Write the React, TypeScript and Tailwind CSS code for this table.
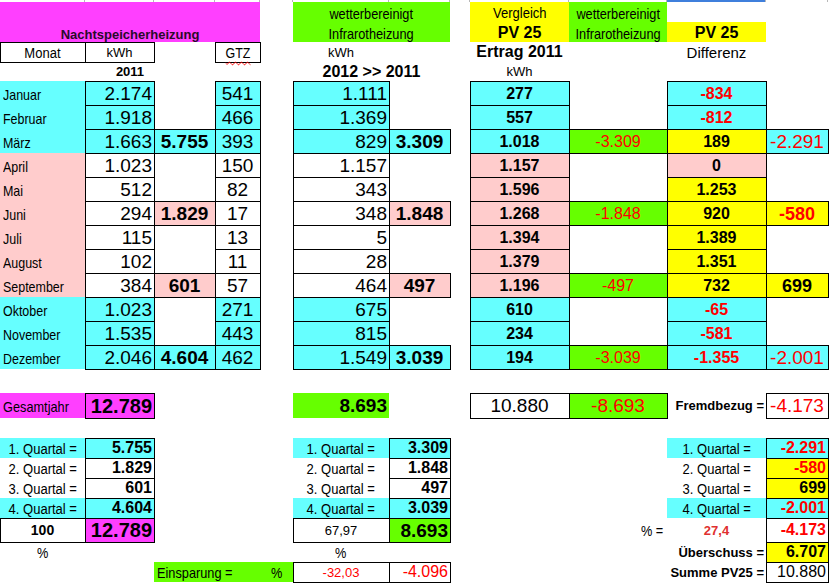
import React from 'react'

const CYAN = 'bg-[#66ffff]'
const PINK = 'bg-[#ffcccc]'
const MAG = 'bg-[#ff3fff]'
const GREEN = 'bg-[#66ff00]'
const YELLOW = 'bg-[#ffff00]'

// collapsed 1px cell border
const BOX =
  'shadow-[1px_0_0_0_#000,0_1px_0_0_#000,1px_1px_0_0_#000,inset_1px_0_0_0_#000,inset_0_1px_0_0_#000]'

const COLS = 'grid grid-cols-[85px_69px_61px_45px_33px_96px_61px_20px_99px_98px_99px_62px_1fr]'

const LAB = 'text-[15px]'
const BIG = 'text-[19px]'
const BIGB = 'text-[19px] font-bold'
const MID = 'text-[16px]'
const MIDB = 'text-[16px] font-bold'
const SM = 'text-[13px]'
const SMB = 'text-[13px] font-bold'
const RED = 'text-[#ff0000]'

function Row({ h, children }: { h: string; children?: React.ReactNode }) {
  return <div className={`${COLS} ${h}`}>{children}</div>
}

type CellProps = {
  col: string
  bg?: string
  box?: boolean
  align?: 'l' | 'c' | 'r'
  cls?: string
  nar?: string
  children?: React.ReactNode
}

// spreadsheet cell; `nar` squeezes the label like the condensed sheet font
function Cell({ col, bg = '', box, align = 'c', cls = '', nar, children }: CellProps) {
  const j =
    align === 'l' ? 'justify-start pl-[3px]' : align === 'r' ? 'justify-end pr-[2px]' : 'justify-center'
  const origin = align === 'l' ? 'origin-left' : align === 'r' ? 'origin-right' : 'origin-center'
  return (
    <div
      className={`row-start-1 ${col} ${bg} ${box ? BOX : ''} flex items-center ${j} whitespace-nowrap leading-none ${cls}`}
    >
      {nar ? <span className={`inline-block ${nar} ${origin}`}>{children}</span> : children}
    </div>
  )
}

type Month = {
  m: string
  w: boolean
  b: string
  c?: string
  d: string
  f: string
  g?: string
  i: string
  j?: string
  k: string
  kb: string
  l?: string
  lb?: string
}

const months: Month[] = [
  { m: 'Januar', w: true, b: '2.174', d: '541', f: '1.111', i: '277', k: '-834', kb: CYAN },
  { m: 'Februar', w: true, b: '1.918', d: '466', f: '1.369', i: '557', k: '-812', kb: CYAN },
  { m: 'März', w: true, b: '1.663', c: '5.755', d: '393', f: '829', g: '3.309', i: '1.018', j: '-3.309', k: '189', kb: YELLOW, l: '-2.291', lb: CYAN },
  { m: 'April', w: false, b: '1.023', d: '150', f: '1.157', i: '1.157', k: '0', kb: PINK },
  { m: 'Mai', w: false, b: '512', d: '82', f: '343', i: '1.596', k: '1.253', kb: YELLOW },
  { m: 'Juni', w: false, b: '294', c: '1.829', d: '17', f: '348', g: '1.848', i: '1.268', j: '-1.848', k: '920', kb: YELLOW, l: '-580', lb: YELLOW },
  { m: 'Juli', w: false, b: '115', d: '13', f: '5', i: '1.394', k: '1.389', kb: YELLOW },
  { m: 'August', w: false, b: '102', d: '11', f: '28', i: '1.379', k: '1.351', kb: YELLOW },
  { m: 'September', w: false, b: '384', c: '601', d: '57', f: '464', g: '497', i: '1.196', j: '-497', k: '732', kb: YELLOW, l: '699', lb: YELLOW },
  { m: 'Oktober', w: true, b: '1.023', d: '271', f: '675', i: '610', k: '-65', kb: CYAN },
  { m: 'November', w: true, b: '1.535', d: '443', f: '815', i: '234', k: '-581', kb: CYAN },
  { m: 'Dezember', w: true, b: '2.046', c: '4.604', d: '462', f: '1.549', g: '3.039', i: '194', j: '-3.039', k: '-1.355', kb: CYAN, l: '-2.001', lb: CYAN },
]

const red = (v?: string) => (v && v.startsWith('-') ? RED : 'text-black')

function MonthRow({ r }: { r: Month }) {
  const season = r.w ? CYAN : PINK
  const white = r.w ? CYAN : 'bg-white'
  return (
    <Row h="h-[24px]">
      <Cell col="col-start-1" bg={season} align="l" cls={`${LAB} pt-[3px]`} nar="scale-x-[0.83]">
        {r.m}
      </Cell>
      <Cell col="col-start-2" bg={white} box align="r" cls={`${BIG} pt-px`}>
        {r.b}
      </Cell>
      {r.c && (
        <Cell col="col-start-3" bg={season} box cls={`${BIGB} pt-px`}>
          {r.c}
        </Cell>
      )}
      <Cell col="col-start-4" bg={white} box cls={`${BIG} pt-px`}>
        {r.d}
      </Cell>
      <Cell col="col-start-6" bg={white} box align="r" cls={`${BIG} pt-px`}>
        {r.f}
      </Cell>
      {r.g && (
        <Cell col="col-start-7" bg={season} box cls={`${BIGB} pt-px`}>
          {r.g}
        </Cell>
      )}
      <Cell col="col-start-9" bg={season} box cls={`${MIDB} pt-px`}>
        {r.i}
      </Cell>
      {r.j && (
        <Cell col="col-start-10" bg={GREEN} box cls={`${MID} ${RED} pt-px`}>
          {r.j}
        </Cell>
      )}
      <Cell col="col-start-11" bg={r.kb} box cls={`${MIDB} ${red(r.k)} pt-px`}>
        {r.k}
      </Cell>
      {r.l && (
        <Cell
          col="col-start-12"
          bg={r.lb}
          box
          cls={`${r.l === '-2.291' || r.l === '-2.001' ? BIG : 'text-[18px] font-bold'} ${red(r.l)} pt-px`}
        >
          {r.l}
        </Cell>
      )}
    </Row>
  )
}

const quarters = [
  { q: '1. Quartal =', bg: CYAN, b: '5.755', g: '3.309', l: '-2.291', lb: CYAN },
  { q: '2. Quartal =', bg: '', b: '1.829', g: '1.848', l: '-580', lb: YELLOW },
  { q: '3. Quartal =', bg: '', b: '601', g: '497', l: '699', lb: YELLOW },
  { q: '4. Quartal =', bg: CYAN, b: '4.604', g: '3.039', l: '-2.001', lb: CYAN },
]

export default function App() {
  return (
    <div className="w-[831px] h-[585px] overflow-hidden bg-white text-black font-['Liberation_Sans',Arial,sans-serif]">
      {/* grid remnant on top */}
      <Row h="h-[2px]">
        {['col-start-1', 'col-start-2', 'col-start-3', 'col-start-4', 'col-start-5', 'col-start-6', 'col-start-7', 'col-start-8', 'col-start-9', 'col-start-10'].map((c) => (
          <div key={c} className={`row-start-1 ${c} border-r border-[#b8b8b8]`} />
        ))}
        <div className="row-start-1 col-start-11 bg-[#3f7fdc] border-r border-[#b8b8b8]" />
        <div className="row-start-1 col-start-12 border-r border-[#b8b8b8]" />
      </Row>

      <Row h="h-[20px]">
        <Cell col="col-start-1 col-span-4" bg={MAG} />
        <Cell col="col-start-6 col-span-2" bg={GREEN} cls={`${LAB} pt-[2px]`} nar="scale-x-[0.85]">
          wetterbereinigt
        </Cell>
        <Cell col="col-start-9" bg={YELLOW} cls="text-[14px] pt-[2px]" nar="scale-x-[0.93]">
          Vergleich
        </Cell>
        <Cell col="col-start-10" bg={GREEN} cls={`${LAB} pt-[2px]`} nar="scale-x-[0.85]">
          wetterbereinigt
        </Cell>
      </Row>
      <Row h="h-[20px]">
        <Cell col="col-start-1 col-span-4" bg={MAG} cls={`${SMB} pt-[4px] text-[#2a0a2a]`}>
          Nachtspeicherheizung
        </Cell>
        <Cell col="col-start-6 col-span-2" bg={GREEN} cls={`${LAB} pt-[2px]`} nar="scale-x-[0.85]">
          Infrarotheizung
        </Cell>
        <Cell col="col-start-9" bg={YELLOW} cls={`${MIDB} pt-[2px]`}>
          PV 25
        </Cell>
        <Cell col="col-start-10" bg={GREEN} cls={`${LAB} pt-[2px]`} nar="scale-x-[0.85]">
          Infrarotheizung
        </Cell>
        <Cell col="col-start-11" bg={YELLOW} cls={`${MIDB} pt-[2px]`}>
          PV 25
        </Cell>
      </Row>
      <Row h="h-[20px]">
        <Cell col="col-start-1" box cls="text-[14px] pt-px" nar="scale-x-[0.93]">
          Monat
        </Cell>
        <Cell col="col-start-2" box cls={`${SM} pt-px`}>
          kWh
        </Cell>
        <Cell col="col-start-4" box cls={`${LAB} pt-px`} nar="scale-x-[0.83]">
          <span className="underline decoration-wavy decoration-[#ff0000] decoration-1 underline-offset-[3px]">GTZ</span>
        </Cell>
        <Cell col="col-start-6" cls={`${SM} pt-px`}>
          kWh
        </Cell>
        <Cell col="col-start-9" cls={MIDB}>
          Ertrag 2011
        </Cell>
        <Cell col="col-start-11" cls="text-[15px]">
          Differenz
        </Cell>
      </Row>
      <Row h="h-[19px]">
        <Cell col="col-start-1 col-span-4" cls={SMB}>
          2011
        </Cell>
        <Cell col="col-start-6 col-span-2" cls={MIDB}>
          2012 &gt;&gt; 2011
        </Cell>
        <Cell col="col-start-9" cls={SM}>
          kWh
        </Cell>
      </Row>

      {months.map((r) => (
        <MonthRow key={r.m} r={r} />
      ))}

      <Row h="h-[24px]" />

      <Row h="h-[25px]">
        <Cell col="col-start-1" bg={MAG} align="l" cls={`${LAB} pt-px`} nar="scale-x-[0.85]">
          Gesamtjahr
        </Cell>
        <Cell col="col-start-2" bg={MAG} box align="r" cls={`${BIGB} text-[20px]`}>
          12.789
        </Cell>
        <Cell col="col-start-6" bg={GREEN} align="r" cls={BIGB}>
          8.693
        </Cell>
        <Cell col="col-start-9" box cls={BIG}>
          10.880
        </Cell>
        <Cell col="col-start-10" bg={GREEN} box cls={`${BIG} ${RED}`}>
          -8.693
        </Cell>
        <Cell col="col-start-11" align="r" cls={SMB}>
          Fremdbezug =
        </Cell>
        <Cell col="col-start-12" box cls={`${BIG} ${RED}`}>
          -4.173
        </Cell>
      </Row>

      <Row h="h-[20px]" />

      {quarters.map((q) => (
        <Row key={q.q} h="h-[20px]">
          <Cell col="col-start-1" bg={q.bg} cls="text-[14px] pt-px" nar="scale-x-[0.93]">
            {q.q}
          </Cell>
          <Cell col="col-start-2" bg={q.bg || 'bg-white'} box align="r" cls={MIDB}>
            {q.b}
          </Cell>
          <Cell col="col-start-6" bg={q.bg} cls="text-[14px] pt-px" nar="scale-x-[0.93]">
            {q.q}
          </Cell>
          <Cell col="col-start-7" bg={q.bg || 'bg-white'} box align="r" cls={MIDB}>
            {q.g}
          </Cell>
          <Cell col="col-start-11" bg={q.bg} cls="text-[14px] pt-px" nar="scale-x-[0.93]">
            {q.q}
          </Cell>
          <Cell col="col-start-12" bg={q.lb} box align="r" cls={`${MIDB} ${red(q.l)}`}>
            {q.l}
          </Cell>
        </Row>
      ))}

      <Row h="h-[24px]">
        <Cell col="col-start-1" box cls="text-[14px] font-bold">
          100
        </Cell>
        <Cell col="col-start-2" bg={MAG} box align="r" cls={`${BIGB} text-[20px]`}>
          12.789
        </Cell>
        <Cell col="col-start-6" box cls={SM}>
          67,97
        </Cell>
        <Cell col="col-start-7" bg={GREEN} box align="r" cls={BIGB}>
          8.693
        </Cell>
        <Cell col="col-start-10" align="r" cls={`${LAB} pr-[4px]`} nar="scale-x-[0.85]">
          % =
        </Cell>
        <Cell col="col-start-11" cls={`${SMB} text-[#e03030]`}>
          27,4
        </Cell>
        <Cell col="col-start-12" box align="r" cls={`${MIDB} ${RED}`}>
          -4.173
        </Cell>
      </Row>

      <Row h="h-[20px]">
        <Cell col="col-start-1" cls={LAB} nar="scale-x-[0.85]">
          %
        </Cell>
        <Cell col="col-start-6" cls={LAB} nar="scale-x-[0.85]">
          %
        </Cell>
        <Cell col="col-start-11" align="r" cls={SMB}>
          Überschuss =
        </Cell>
        <Cell col="col-start-12" bg={YELLOW} box align="r" cls={MIDB}>
          6.707
        </Cell>
      </Row>

      <Row h="h-[20px]">
        <Cell col="col-start-3 col-span-2" bg={GREEN} align="l" cls={`${LAB} pt-px`} nar="scale-x-[0.85]">
          Einsparung =
        </Cell>
        <Cell col="col-start-5" bg={GREEN} cls={LAB} nar="scale-x-[0.85]">
          %
        </Cell>
        <Cell col="col-start-6" box cls={`${SM} ${RED}`}>
          -32,03
        </Cell>
        <Cell col="col-start-7" box align="r" cls={`${MID} ${RED}`}>
          -4.096
        </Cell>
        <Cell col="col-start-11" align="r" cls={SMB}>
          Summe PV25 =
        </Cell>
        <Cell col="col-start-12" box align="r" cls={MID}>
          10.880
        </Cell>
      </Row>
    </div>
  )
}
